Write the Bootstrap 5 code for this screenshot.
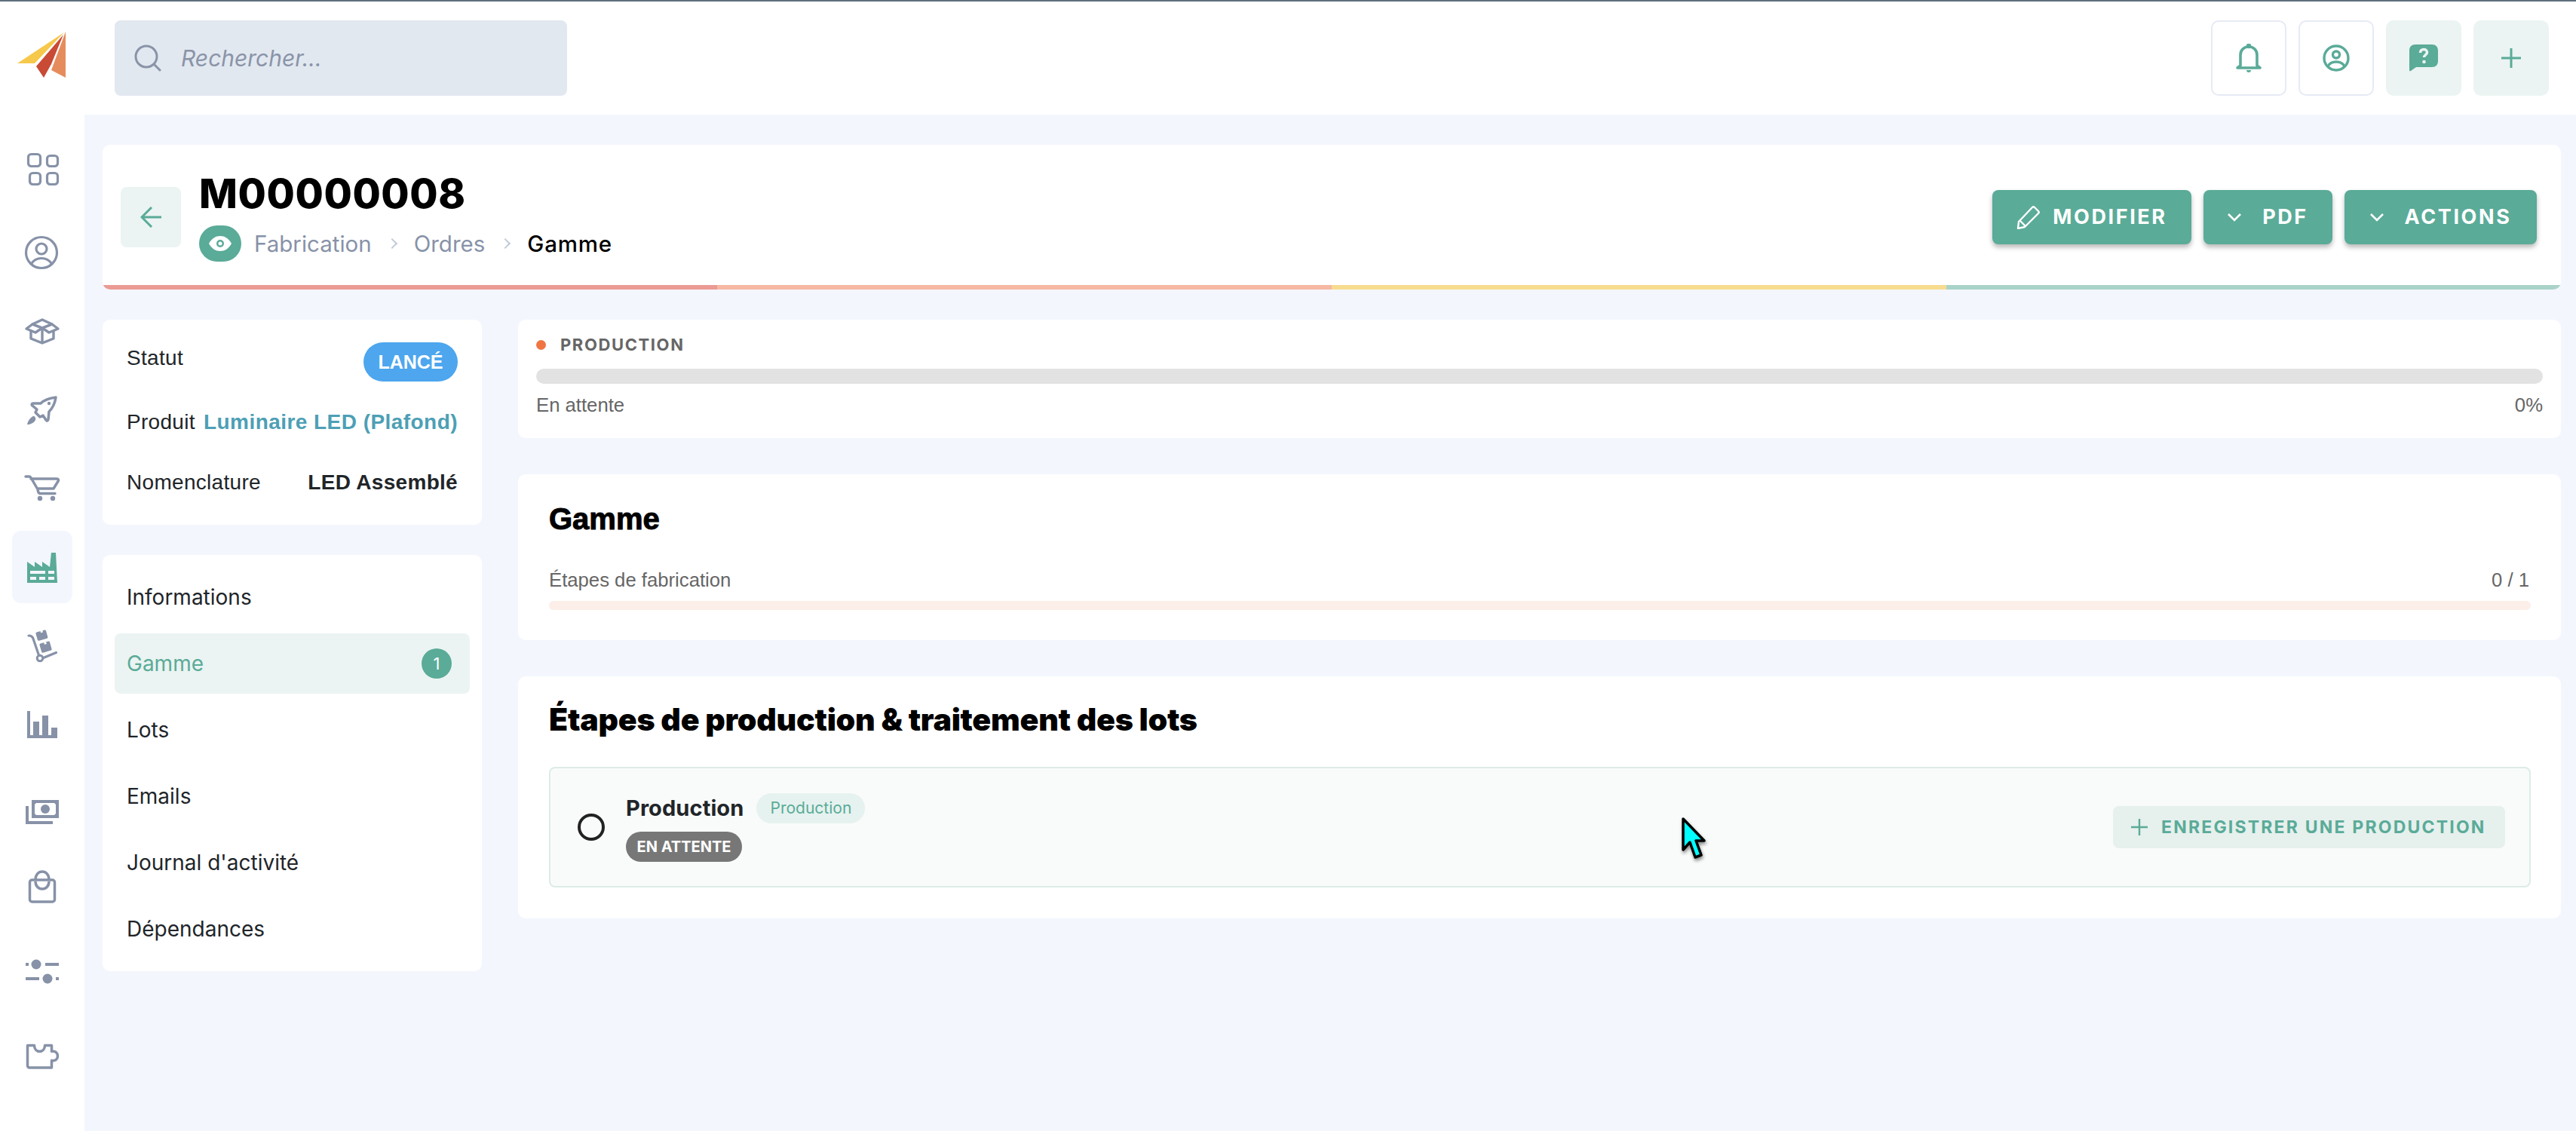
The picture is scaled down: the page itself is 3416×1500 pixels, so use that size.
<!DOCTYPE html>
<html lang="fr">
<head>
<meta charset="utf-8">
<title>M00000008</title>
<link rel="stylesheet" href="https://cdn.jsdelivr.net/npm/bootstrap@5.3.0/dist/css/bootstrap.min.css">
<style>
:root{--teal:#5aab98;--teal-soft:#ebf4f2;--slate:#8792a8;--page:#f3f6fd;}
html,body{height:100%;}
body{font-family:"Inter","Noto Sans",sans-serif;background:#fff;color:#212529;overflow:hidden;}
.top-strip{height:152px;border-top:2px solid #5f707c;padding-right:36px;}
.logo-cell{width:112px;}
.seek{width:600px;height:100px;background:#e2e8f0;border-radius:8px;margin-left:40px;padding-left:26px;gap:26px;color:#8a94a8;font-style:italic;font-size:30px;}
.tool-btn{width:100px;height:100px;border-radius:10px;border:2px solid #e6eaf4;background:#fff;padding:0;}
.tool-btn.tinted{background:var(--teal-soft);border-color:var(--teal-soft);}
.rail{width:112px;padding-top:25px;}
.rail-item{width:80px;height:96px;margin-left:16px;border-radius:12px;}
.rail-item.on{background:var(--page);}
.rail-item:nth-child(2){margin-top:14px;}
.rail-item:nth-child(3),.rail-item:nth-child(4),.rail-item:nth-child(6),.rail-item:nth-child(7){margin-top:8px;}
.rail-item:nth-child(5),.rail-item:nth-child(8){margin-top:9px;}
.rail-item:nth-child(9){margin-top:20px;}
.rail-item:nth-child(10){margin-top:3px;}
.rail-item:nth-child(11){margin-top:16px;}
.rail-item:nth-child(12){margin-top:17px;}
.stage{background:var(--page);padding:40px 20px 0 24px;min-width:0;}
.sheet{border:0;border-radius:10px;background:#fff;}
.head-sheet{height:192px;overflow:hidden;}
.head-body{height:186px;padding:6px 32px 0 24px;}
.back-btn{width:80px;height:80px;border:0;border-radius:8px;background:var(--teal-soft);padding:0;margin-right:24px;}
.doc-title{font-size:54px;line-height:56px;font-weight:800;color:#000;margin:0 0 14px;letter-spacing:.6px;}
.eye-pill{width:56px;height:48px;border-radius:24px;background:var(--teal);margin-right:17px;}
.crumbs{--bs-breadcrumb-margin-bottom:0;--bs-breadcrumb-item-padding-x:0;font-size:29.500px;line-height:48px;color:var(--slate);}
.crumbs .breadcrumb-item+.breadcrumb-item{padding-left:22px;}
.crumbs .breadcrumb-item+.breadcrumb-item::before{content:"";width:10px;height:10px;margin:19px 24px 0 0;padding:0;float:left;border-top:2px solid #c3cad8;border-right:2px solid #c3cad8;transform:rotate(45deg);}
.crumbs .breadcrumb-item.active{color:#000;font-weight:500;letter-spacing:.8px;}
.act-btn{height:72px;border:0;border-radius:8px;background:var(--teal);color:#fff;font-size:27px;font-weight:700;letter-spacing:2.600px;box-shadow:0 4px 6px rgba(0,0,0,.28);padding:0;gap:16px;}
.act-btn:hover{background:var(--teal);color:#fff;}
.w-edit{width:264px;}.w-pdf{width:171px;gap:28px;}.w-act{width:255px;gap:28px;}
.tones{height:6px;}
.tone-r{background:#eb9a94;}.tone-o{background:#f6b8a3;}.tone-y{background:#f7dc8f;}.tone-g{background:#a9d3c8;}
.cols{margin-top:40px;gap:48px;}
.left-col{width:503px;flex:none;gap:40px;}
.right-col{gap:48px;min-width:0;}
.info-sheet{font-family:"Liberation Sans",Arial,sans-serif;font-size:28px;line-height:42px;letter-spacing:.3px;padding:30px 32px 35px;height:272px;}
.state-pill{width:125px;height:52px;border-radius:26px;background:#4da6ee;color:#fff;font-size:25px;font-weight:700;letter-spacing:0;padding:0;}
.row-a{height:52px;margin-bottom:33px;}.row-b{margin-bottom:38px;}
.prod-link{color:#4d9fb5;font-weight:700;text-decoration:none;letter-spacing:.45px;}
.nav-sheet{padding:16px;height:552px;}
.side-nav{--bs-nav-link-padding-x:16px;--bs-nav-link-padding-y:0;gap:8px;font-size:28px;}
.side-nav .nav-link{height:80px;color:#212529;border-radius:8px;line-height:80px;}
.side-nav .nav-link.active{background:var(--teal-soft);color:var(--teal);}
.count-dot{width:40px;height:40px;border-radius:50%;background:var(--teal);color:#fff;font-size:22px;font-weight:400;margin-right:8px;padding:0;}
.prog-sheet{padding:16px 24px 26px;height:157px;}
.prog-label{font-size:22px;line-height:34px;font-weight:700;color:#666;letter-spacing:1.600px;gap:19px;}
.prog-dot{width:13px;height:13px;border-radius:50%;background:#ef7543;}
.bar-grey{height:20px;margin-top:15px;background:#e2e2e2;border-radius:10px;}
.ari-note{font-family:"Liberation Sans",Arial,sans-serif;font-size:25.700px;line-height:36px;color:#666;}
.note-gap{margin-top:10px;}
.note-gap-lg{margin-top:33px;}
.ratio-end{margin-right:2px;}
.gamme-sheet{padding:29px 40px 40px 41px;height:220px;}
.h-plain{font-family:"Liberation Sans",Arial,sans-serif;font-weight:700;font-size:40px;line-height:60px;color:#000;margin:0;-webkit-text-stroke:1px #000;}
.bar-peach{height:12px;margin-top:10px;background:#fceee8;border-radius:6px;}
.steps-sheet{padding:29px 40px 41px 41px;height:321px;}
.h-steps{font-family:"Inter",sans-serif;font-weight:900;font-size:41px;line-height:56px;color:#000;margin:0 0 35px;letter-spacing:-.2px;}
.step-box{height:160px;border:2px solid #dcece7;border-radius:8px;background:#f9fbfa;padding:0 32px 0 36px;}
.radio-ring{width:36px;height:36px;border:4px solid #222;border-radius:50%;margin-right:28px;}
.step-name{font-size:29px;line-height:40px;font-weight:700;color:#212529;letter-spacing:.1px;}
.tag-soft{height:40px;width:144px;border-radius:20px;background:#e6f2ef;color:var(--teal);font-size:21px;font-weight:400;margin-left:17px;padding:0;}
.tag-grey{height:40px;width:154px;border-radius:20px;background:#777;color:#fff;font-size:20px;font-weight:700;margin-top:11px;padding:0;}
.add-btn{width:520px;height:56px;border:0;border-radius:8px;background:#e6f0ed;color:var(--teal);font-size:23px;font-weight:700;letter-spacing:2.200px;padding:0 0 0 24px;gap:18px;}
.add-btn:hover{background:#e6f0ed;color:var(--teal);}
.pointer-mark{position:fixed;left:2228px;top:1083px;filter:drop-shadow(1px 3px 2px rgba(0,0,0,.45));}
</style>
</head>
<body class="d-flex flex-column">
<header class="top-strip d-flex align-items-center flex-shrink-0">
  <div class="logo-cell d-flex justify-content-start">
    <svg width="112" height="150" viewBox="0 0 112 150" role="img" aria-label="logo"><polygon points="23,82 85,41 46,82" fill="#f6c84b"/><polygon points="84,44 48,86 58,101 68,83" fill="#c94a35"/><polygon points="87,40 68,91 87,101" fill="#e68c5c"/></svg>
  </div>
  <div class="seek d-flex align-items-center">
    <svg width="36" height="36" viewBox="0 0 36 36" fill="none" stroke="#8a94a8" stroke-width="3" stroke-linecap="round"><circle cx="16" cy="16" r="14"/><path d="M27 27l7 7"/></svg>
    <span>Rechercher...</span>
  </div>
  <div class="ms-auto d-flex gap-3">
    <button class="tool-btn btn d-flex align-items-center justify-content-center" aria-label="Notifications">
      <svg width="34" height="38" viewBox="0 0 34 38" fill="none" stroke="#5aab98" stroke-width="3.600" stroke-linejoin="round"><path d="M6 29V15C6 8 11 4 17 4s11 4 11 11v14l4 3H2z"/><circle cx="17" cy="3" r="1.500" fill="#5aab98"/><path d="M14 35h6c0 2-1 3-3 3s-3-1-3-3z" fill="#5aab98" stroke="none"/></svg>
    </button>
    <button class="tool-btn btn d-flex align-items-center justify-content-center" aria-label="Profil">
      <svg width="36" height="36" viewBox="0 0 36 36" fill="none" stroke="#5aab98" stroke-width="3.400"><circle cx="18" cy="18" r="16"/><circle cx="18" cy="13.500" r="4.500"/><path d="M7 29c2-4 6-6 11-6s9 2 11 6"/></svg>
    </button>
    <button class="tool-btn tinted btn d-flex align-items-center justify-content-center" aria-label="Aide">
      <svg width="38" height="36" viewBox="0 0 38 36"><path d="M8 0h22c5 0 8 3 8 8v14c0 5-3 8-8 8H9l-7 5c-1 .7-2 .3-2-1V8c0-5 3-8 8-8z" fill="#5aab98"/><path d="M14.500 11c0-3 2-4.500 4.500-4.500s4.500 1.500 4.500 4c0 3-4 3.500-4 6.500" fill="none" stroke="#ebf4f2" stroke-width="3.600"/><circle cx="19.500" cy="23" r="2.300" fill="#ebf4f2"/></svg>
    </button>
    <button class="tool-btn tinted btn d-flex align-items-center justify-content-center" aria-label="Ajouter">
      <svg width="26" height="26" viewBox="0 0 26 26" stroke="#5aab98" stroke-width="3"><path d="M13 0v26M0 13h26"/></svg>
    </button>
  </div>
</header>

<div class="d-flex flex-grow-1 overflow-hidden">
  <nav class="rail d-flex flex-column flex-shrink-0">
    <div class="rail-item d-flex align-items-center justify-content-center"><svg width="48" height="48" viewBox="0 0 48 48" fill="none" stroke="#8792a8" stroke-width="3.200"><rect x="5.500" y="3.500" width="16" height="16" rx="4"/><rect x="30.500" y="5.500" width="14" height="14" rx="4"/><rect x="7.500" y="28.500" width="14" height="15" rx="4"/><rect x="30.500" y="28.500" width="14" height="15" rx="4"/></svg></div>
    <div class="rail-item d-flex align-items-center justify-content-center"><svg width="48" height="48" viewBox="0 0 48 48" fill="none" stroke="#8792a8" stroke-width="3.200"><circle cx="23" cy="24" r="20.500"/><circle cx="23" cy="19" r="7"/><path d="M9.500 39c3-5 8-7.500 13.500-7.500s10.500 2.500 13.500 7.500"/></svg></div>
    <div class="rail-item d-flex align-items-center justify-content-center"><svg width="48" height="48" viewBox="0 0 48 48" fill="none" stroke="#8792a8" stroke-width="3.400" stroke-linejoin="round"><path d="M9 23v11l15 6 15-6V23"/><path d="M24 20v20"/><path d="M11 15l13-6 13 6-13 5z"/><path d="M24 20l13-5 8 6-12 5z"/><path d="M24 20l-13-5-8 6 12 5z"/></svg></div>
    <div class="rail-item d-flex align-items-center justify-content-center"><svg width="48" height="48" viewBox="0 0 48 48" fill="none" stroke="#8792a8" stroke-width="3.500" stroke-linejoin="round"><path d="M42 8C34 9 27 11 22 16H12c-2 0-2.500 2-1 3l6 5-2 4 6 6 4-2 4 6c1 2 3 1 3-1l1-10c5-5 8-12 9-19z"/><circle cx="33" cy="16" r="2.200" fill="#8792a8" stroke="none"/><path d="M12 33c-3 1-7 6-8 11 4 0 9-2 11-6 1-2-1-6-3-5z" fill="#8792a8" stroke="none"/></svg></div>
    <div class="rail-item d-flex align-items-center justify-content-center"><svg width="48" height="48" viewBox="0 0 48 48" fill="none" stroke="#8792a8" stroke-width="3.400" stroke-linejoin="round" stroke-linecap="round"><path d="M2 8h4.500c1 0 2 .6 2.500 1.500L18 25c.5 2 0 5 3 5.500h20"/><path d="M9 11h34c2 0 3 1 2.500 2.500L39 24H19"/><circle cx="21" cy="37" r="1.500" fill="#8792a8"/><circle cx="38" cy="37" r="1.500" fill="#8792a8"/></svg></div>
    <div class="rail-item on d-flex align-items-center justify-content-center"><svg width="48" height="48" viewBox="0 0 48 48"><path d="M4 45V17l10 7v-7l10 7v-7l10 7 2-19h6l2 40z" fill="#5aab98"/><g fill="#f3f6fd"><rect x="8" y="29" width="20" height="4"/><rect x="32" y="29" width="8" height="4"/><rect x="8" y="37" width="8" height="4"/><rect x="20" y="37" width="8" height="4"/><rect x="32" y="37" width="8" height="4"/></g></svg></div>
    <div class="rail-item d-flex align-items-center justify-content-center"><svg width="48" height="48" viewBox="0 0 48 48"><g fill="#8792a8"><rect x="16.500" y="5" width="14" height="11.500" rx="1.500" transform="rotate(-16 23 11)"/><rect x="21.500" y="20" width="14" height="12.500" rx="1.500" transform="rotate(-16 28 26)"/></g><g fill="#fff"><rect x="21.500" y="4" width="3" height="3" transform="rotate(-16 23 5)"/><rect x="26.500" y="19.500" width="3" height="3" transform="rotate(-16 28 21)"/></g><path d="M6 11c3 0 5 1 6 4l7.500 22M25.500 40.500l17-7" fill="none" stroke="#8792a8" stroke-width="3.200" stroke-linecap="round"/><circle cx="21" cy="41" r="3.800" fill="none" stroke="#8792a8" stroke-width="3"/></svg></div>
    <div class="rail-item d-flex align-items-center justify-content-center"><svg width="48" height="48" viewBox="0 0 48 48" fill="#8792a8"><rect x="4" y="6" width="4" height="36"/><rect x="4" y="38" width="40" height="4"/><rect x="12" y="20" width="8" height="22"/><rect x="24" y="12" width="8" height="30"/><rect x="36" y="28" width="8" height="14"/></svg></div>
    <div class="rail-item d-flex align-items-center justify-content-center"><svg width="48" height="48" viewBox="0 0 48 48" fill="#8792a8"><path d="M2 16h4v20h32v4H2z"/><rect x="10" y="8" width="36" height="24"/><path d="M16 12h24l2 2v12l-2 2H16l-2-2V14z" fill="#fff"/><circle cx="28" cy="20" r="6"/></svg></div>
    <div class="rail-item d-flex align-items-center justify-content-center"><svg width="48" height="48" viewBox="0 0 48 48" fill="none" stroke="#8792a8" stroke-width="3.500"><rect x="7.500" y="15" width="33" height="29" rx="3"/><path d="M15 15c0-7 4-11 9-11s9 4 9 11"/><path d="M15 17c0 6 4 10 9 10s9-4 9-10"/></svg></div>
    <div class="rail-item d-flex align-items-center justify-content-center"><svg width="48" height="48" viewBox="0 0 48 48" fill="#8792a8"><rect x="2" y="13" width="4" height="4"/><circle cx="16" cy="15" r="6.500"/><rect x="28" y="13" width="18" height="4"/><rect x="2" y="32" width="18" height="4"/><circle cx="31" cy="34" r="6.500"/><rect x="42" y="32" width="4" height="4"/></svg></div>
    <div class="rail-item d-flex align-items-center justify-content-center"><svg width="48" height="48" viewBox="0 0 48 48" fill="none" stroke="#8792a8" stroke-width="3.500" stroke-linejoin="round"><path d="M4.500 9.500h9c0 5 3 8 7 8s7-3 7-8h9v8c5-1 8 2 8 6s-3 7-8 6v9.500h-29c-2 0-3-1-3-3z"/></svg></div>
  </nav>

  <main class="stage flex-grow-1">
    <section class="card sheet head-sheet">
      <div class="head-body d-flex align-items-center">
        <button class="back-btn btn d-flex align-items-center justify-content-center flex-shrink-0" aria-label="Retour">
          <svg width="28" height="28" viewBox="0 0 28 28" fill="none" stroke="#5aab98" stroke-width="3"><path d="M15 1L2 14l13 13M2 14h26"/></svg>
        </button>
        <div>
          <h1 class="doc-title">M00000008</h1>
          <div class="d-flex align-items-center">
            <span class="eye-pill d-flex align-items-center justify-content-center">
              <svg width="30" height="20" viewBox="0 0 30 20"><path d="M0 10C4 3 9 0 15 0s11 3 15 10c-4 7-9 10-15 10S4 17 0 10z" fill="#fff"/><circle cx="15" cy="10" r="5" fill="#5aab98"/><circle cx="15" cy="10" r="2.500" fill="#fff"/></svg>
            </span>
            <ol class="breadcrumb crumbs">
              <li class="breadcrumb-item">Fabrication</li>
              <li class="breadcrumb-item">Ordres</li>
              <li class="breadcrumb-item active">Gamme</li>
            </ol>
          </div>
        </div>
        <div class="ms-auto d-flex gap-3">
          <button class="btn act-btn w-edit d-flex align-items-center justify-content-center"><svg width="32" height="32" viewBox="0 0 32 32" fill="none" stroke="#fff" stroke-width="2.400" stroke-linejoin="round"><path d="M3 22L21 3c1-1 2-1 3 0l5 5c1 1 1 2 0 3L11 29l-9 2z"/><path d="M5 21l7 7"/></svg><span>MODIFIER</span></button>
          <button class="btn act-btn w-pdf d-flex align-items-center justify-content-center"><svg width="18" height="11" viewBox="0 0 18 11" fill="none" stroke="#fff" stroke-width="2.600"><path d="M1 1l8 8 8-8"/></svg><span>PDF</span></button>
          <button class="btn act-btn w-act d-flex align-items-center justify-content-center"><svg width="18" height="11" viewBox="0 0 18 11" fill="none" stroke="#fff" stroke-width="2.600"><path d="M1 1l8 8 8-8"/></svg><span>ACTIONS</span></button>
        </div>
      </div>
      <div class="tones d-flex">
        <div class="tone-r flex-fill w-25"></div><div class="tone-o flex-fill w-25"></div><div class="tone-y flex-fill w-25"></div><div class="tone-g flex-fill w-25"></div>
      </div>
    </section>

    <div class="cols d-flex align-items-start">
      <div class="left-col d-flex flex-column">
        <section class="card sheet info-sheet">
          <div class="row-a d-flex justify-content-between align-items-start"><span>Statut</span><span class="badge state-pill d-flex align-items-center justify-content-center">LANCÉ</span></div>
          <div class="row-b d-flex justify-content-between"><span>Produit</span><a class="prod-link" href="#">Luminaire LED (Plafond)</a></div>
          <div class="d-flex justify-content-between"><span>Nomenclature</span><strong>LED Assemblé</strong></div>
        </section>
        <section class="card sheet nav-sheet">
          <ul class="nav flex-column side-nav">
            <li class="nav-item"><a class="nav-link" href="#">Informations</a></li>
            <li class="nav-item"><a class="nav-link active d-flex align-items-center justify-content-between" href="#"><span>Gamme</span><span class="badge count-dot d-flex align-items-center justify-content-center">1</span></a></li>
            <li class="nav-item"><a class="nav-link" href="#">Lots</a></li>
            <li class="nav-item"><a class="nav-link" href="#">Emails</a></li>
            <li class="nav-item"><a class="nav-link" href="#">Journal d'activité</a></li>
            <li class="nav-item"><a class="nav-link" href="#">Dépendances</a></li>
          </ul>
        </section>
      </div>

      <div class="right-col d-flex flex-column flex-grow-1">
        <section class="card sheet prog-sheet">
          <div class="prog-label d-flex align-items-center"><span class="prog-dot"></span><span>PRODUCTION</span></div>
          <div class="progress bar-grey"><div class="progress-bar" style="width:0%"></div></div>
          <div class="ari-note note-gap d-flex justify-content-between"><span>En attente</span><span>0%</span></div>
        </section>
        <section class="card sheet gamme-sheet">
          <h2 class="h-plain">Gamme</h2>
          <div class="ari-note note-gap-lg d-flex justify-content-between"><span>Étapes de fabrication</span><span class="ratio-end">0 / 1</span></div>
          <div class="progress bar-peach"><div class="progress-bar" style="width:0%"></div></div>
        </section>
        <section class="card sheet steps-sheet">
          <h2 class="h-steps">Étapes de production &amp; traitement des lots</h2>
          <div class="step-box d-flex align-items-center">
            <span class="radio-ring flex-shrink-0"></span>
            <div>
              <div class="d-flex align-items-center"><span class="step-name">Production</span><span class="badge tag-soft d-flex align-items-center justify-content-center">Production</span></div>
              <span class="badge tag-grey d-flex align-items-center justify-content-center">EN ATTENTE</span>
            </div>
            <button class="btn add-btn ms-auto d-flex align-items-center"><svg width="22" height="22" viewBox="0 0 22 22" stroke="#5aab98" stroke-width="2.400"><path d="M11 0v22M0 11h22"/></svg><span>ENREGISTRER UNE PRODUCTION</span></button>
          </div>
        </section>
      </div>
    </div>
  </main>
</div>
<svg class="pointer-mark" width="36" height="60" viewBox="0 0 36 60" aria-hidden="true"><path d="M4 3v41l9-10 7 20 8-3-7-19h11z" fill="#00ffff" stroke="#000" stroke-width="3.500" stroke-linejoin="round"/></svg>
<script src="https://cdn.jsdelivr.net/npm/bootstrap@5.3.0/dist/js/bootstrap.bundle.min.js"></script>
</body>
</html>
